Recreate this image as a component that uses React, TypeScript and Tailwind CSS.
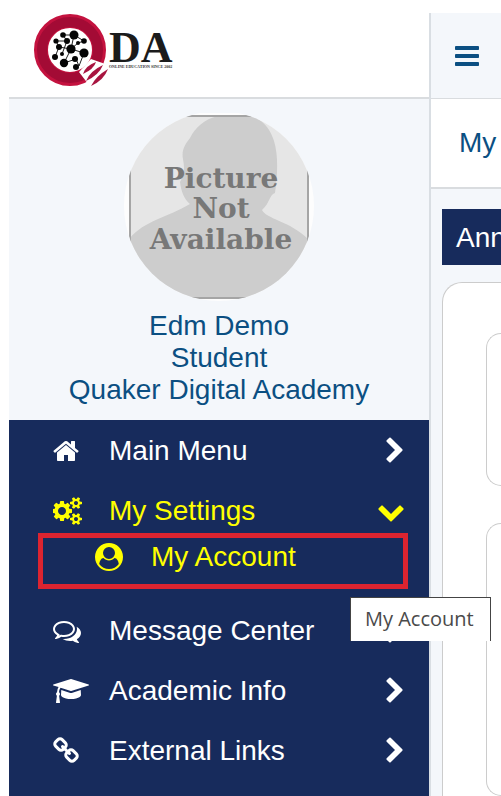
import clsx from "clsx";

type IconProps = {
  name: keyof typeof icons;
  className?: string;
};

const icons = {
  home: {
    box: "64 0 1664 1792",
    d: "M1472 992v480q0 26-19 45t-45 19h-384v-384h-256v384h-384q-26 0-45-19t-19-45v-480q0-1 .5-3t.5-3l575-474 575 474q1 2 1 6zm223-69l-62 74q-8 9-21 11h-3q-13 0-21-7l-692-577-692 577q-12 8-24 7-13-2-21-11l-62-74q-8-10-7-23.5t11-21.5l719-599q32-26 76-26t76 26l244 204v-195q0-14 9-23t23-9h192q14 0 23 9t9 23v408l219 182q10 8 11 21.5t-7 23.5z",
  },
  cogs: {
    box: "0 0 1920 1792",
    d: "M832 896q0-106-75-181t-181-75-181 75-75 181 75 181 181 75 181-75 75-181zm768 512q0-52-38-90t-90-38-90 38-38 90q0 53 37.5 90.5t90.5 37.5 90.5-37.5 37.5-90.5zm0-1024q0-52-38-90t-90-38-90 38-38 90q0 53 37.5 90.5t90.5 37.5 90.5-37.5 37.5-90.5zm-384 421v185q0 10-7 19.5t-16 10.5l-155 24q-11 35-32 76 34 48 90 115 7 11 7 20 0 12-7 19-23 30-82.5 89.5t-78.5 59.5q-11 0-21-7l-115-90q-37 19-77 31-11 108-23 155-7 24-30 24h-186q-11 0-20-7.5t-10-17.5l-23-153q-34-10-75-31l-118 89q-7 7-20 7-11 0-21-8-144-133-144-160 0-9 7-19 10-14 41-53t47-61q-23-44-35-82l-152-24q-10-1-17-9.5t-7-19.5v-185q0-10 7-19.5t16-10.5l155-24q11-35 32-76-34-48-90-115-7-11-7-20 0-12 7-20 22-30 82-89t79-59q11 0 21 7l115 90q34-18 77-32 11-108 23-154 7-24 30-24h186q11 0 20 7.5t10 17.5l23 153q34 10 75 31l118-89q8-7 20-7 11 0 21 8 144 133 144 160 0 8-7 19-12 16-42 54t-45 60q23 48 34 82l152 23q10 2 17 10.5t7 19.5zm640 533v140q0 16-149 31-12 27-30 52 51 113 51 138 0 4-4 7-122 71-124 71-8 0-46-47t-52-68q-20 2-30 2t-30-2q-14 21-52 68t-46 47q-2 0-124-71-4-3-4-7 0-25 51-138-18-25-30-52-149-15-149-31v-140q0-16 149-31 13-29 30-52-51-113-51-138 0-4 4-7 4-2 35-20t59-34 30-16q8 0 46 46.5t52 67.5q20-2 30-2t30 2q51-71 92-112l6-2q4 0 124 70 4 3 4 7 0 25-51 138 17 23 30 52 149 15 149 31zm0-1024v140q0 16-149 31-12 27-30 52 51 113 51 138 0 4-4 7-122 71-124 71-8 0-46-47t-52-68q-20 2-30 2t-30-2q-14 21-52 68t-46 47q-2 0-124-71-4-3-4-7 0-25 51-138-18-25-30-52-149-15-149-31v-140q0-16 149-31 13-29 30-52-51-113-51-138 0-4 4-7 4-2 35-20t59-34 30-16q8 0 46 46.5t52 67.5q20-2 30-2t30 2q51-71 92-112l6-2q4 0 124 70 4 3 4 7 0 25-51 138 17 23 30 52 149 15 149 31z",
  },
  comments: {
    box: "0 0 1792 1792",
    d: "M704 384q-153 0-286 52t-211.5 141-78.5 191q0 82 53 158t149 132l97 56-35 84q34-20 62-39l44-31 53 10q78 14 153 14 153 0 286-52t211.5-141 78.5-191-78.5-191-211.5-141-286-52zm0-128q191 0 353.5 68.5t256.5 186.5 94 257-94 257-256.5 186.5-353.5 68.5q-86 0-176-16-124 88-278 128-36 9-86 16h-3q-11 0-20.5-8t-11.5-21q-1-3-1-6.5t.5-6.5 2-6l2.5-5 3.5-5.5 4-5 4.5-5 4-4.5q5-6 23-25t26-29.5 22.5-29 25-38.5 20.5-44q-124-72-195-177t-71-224q0-139 94-257t256.5-186.5 353.5-68.5zm822 1169q10 24 20.5 44t25 38.5 22.5 29 26 29.5 23 25q1 1 4 4.5t4.5 5 4 5 3.5 5.5l2.5 5 2 6 .5 6.5-1 6.5q-3 14-13 22t-22 7q-50-7-86-16-154-40-278-128-90 16-176 16-271 0-472-132 58 4 88 4 161 0 309-45t264-129q125-92 192-212t67-254q0-77-23-152 129 71 204 178t75 230q0 120-71 224.5t-195 176.5z",
  },
  graduation: {
    box: "0 0 2304 1792",
    d: "M1774 836l18 316q4 69-82 128t-235 93.5-323 34.5-323-34.5-235-93.5-82-128l18-316 574 181q22 7 48 7t48-7zm530-324q0 23-22 31l-1120 352q-4 1-10 1t-10-1l-652-206q-43 34-71 111.5t-34 178.5q63 36 63 109 0 69-58 107l58 433q2 14-8 25-9 11-24 11h-192q-15 0-24-11-10-11-8-25l58-433q-58-38-58-107 0-73 65-111 11-207 98-330l-333-104q-22-8-22-31t22-31l1120-352q4-1 10-1t10 1l1120 352q22 8 22 31z",
  },
  link: {
    box: "64 0 1664 1792",
    d: "M1520 1216q0-40-28-68l-208-208q-28-28-68-28-42 0-72 32 3 3 19 18.5t21.5 21.5 15 19 13 25.5 3.5 27.5q0 40-28 68t-68 28q-15 0-27.5-3.5t-25.5-13-19-15-21.5-21.5-18.5-19q-33 31-33 73 0 40 28 68l206 207q27 27 68 27 40 0 68-26l147-146q28-28 28-67zm-703-705q0-40-28-68l-206-207q-28-28-68-28-39 0-68 27l-147 146q-28 28-28 67 0 40 28 68l208 208q27 27 68 27 42 0 72-31-3-3-19-18.5t-21.5-21.5-15-19-13-25.5-3.5-27.5q0-40 28-68t68-28q15 0 27.5 3.5t25.5 13 19 15 21.5 21.5 18.5 19q33-31 33-73zm895 705q0 120-85 203l-147 146q-83 83-203 83-121 0-204-85l-206-207q-83-83-83-203 0-123 88-209l-88-88q-86 88-208 88-120 0-204-84l-208-208q-84-84-84-204t85-203l147-146q83-83 203-83 121 0 204 85l206 207q83 83 83 203 0 123-88 209l88 88q86-88 208-88 120 0 204 84l208 208q84 84 84 204z",
  },
  user: {
    box: "0 0 1792 1792",
    d: "M1523 1339q-22-155-87.5-257.5t-184.5-118.5q-67 74-159.5 115.5t-195.5 41.5-195.5-41.5-159.5-115.5q-119 16-184.5 118.5t-87.5 257.5q106 150 271 237.5t356 87.5 356-87.5 271-237.5zm-243-699q0-159-112.5-271.5t-271.5-112.5-271.5 112.5-112.5 271.5 112.5 271.5 271.5 112.5 271.5-112.5 112.5-271.5zm512 256q0 182-71 347.5t-190.5 286-285.5 191.5-349 71-348-71-286-191-191-286-71-348 71-348 191-286 286-191 348-71 348 71 286 191 191 286 71 348z",
  },
  right: {
    box: "256 0 1280 1792",
    d: "M1363 877l-742 742q-19 19-45 19t-45-19l-166-166q-19-19-19-45t19-45l531-531-531-531q-19-19-19-45t19-45l166-166q19-19 45-19t45 19l742 742q19 19 19 45t-19 45z",
  },
  down: {
    box: "0 0 1792 1792",
    d: "M1683 808l-742 741q-19 19-45 19t-45-19l-742-741q-19-19-19-45.5t19-45.5l166-165q19-19 45-19t45 19l531 531 531-531q19-19 45-19t45 19l166 165q19 19 19 45.5t-19 45.5z",
  },
  bars: {
    box: "128 0 1536 1792",
    d: "M1664 1344v128q0 26-19 45t-45 19h-1408q-26 0-45-19t-19-45v-128q0-26 19-45t45-19h1408q26 0 45 19t19 45zm0-512v128q0 26-19 45t-45 19h-1408q-26 0-45-19t-19-45v-128q0-26 19-45t45-19h1408q26 0 45 19t19 45zm0-512v128q0 26-19 45t-45 19h-1408q-26 0-45-19t-19-45v-128q0-26 19-45t45-19h1408q26 0 45 19t19 45z",
  },
};

function Icon({ name, className }: IconProps) {
  return (
    <svg viewBox={icons[name].box} className={clsx("h-7 w-auto shrink-0 fill-current", className)} aria-hidden="true">
      <path d={icons[name].d} />
    </svg>
  );
}

function Logo() {
  return (
    <a href="#" aria-label="Quaker Digital Academy" className="flex">
      <svg viewBox="0 0 140 76" className="h-[76px] w-[140px]">
        <circle cx="37" cy="37" r="29" fill="#fff" stroke="#c4123f" strokeWidth="14" />
        <circle cx="37" cy="37" r="28" fill="none" stroke="#a30b35" strokeWidth="10" />
        <path d="M46 59L58 46L78 53L59 76Z" fill="#fff" />
        <g fill="#a81440">
          <path d="M50 61Q52 53 63 49Q61 56 50 61Z" />
          <path d="M53 68Q57 58 70 52Q66 62 53 68Z" />
          <path d="M58 73Q63 63 75 56Q71 67 58 73Z" />
        </g>
        <path
          d="M23 28L34 28M30 22L41 22L51 28L45 30M41 22L38 36L51 40L46 53L43 46L31 50L38 36L26 34L23 28M34 28L29 41M26 34L22 44M30 22L34 28M38 36L45 30"
          fill="none"
          stroke="#222"
          strokeWidth="1"
        />
        <g fill="#050505">
          <circle cx="41" cy="22" r="4.5" />
          <circle cx="30" cy="22" r="2.8" />
          <circle cx="23" cy="28" r="2.6" />
          <circle cx="34" cy="28" r="3" />
          <circle cx="45" cy="30" r="2" />
          <circle cx="51" cy="28" r="2.8" />
          <circle cx="26" cy="34" r="3" />
          <circle cx="38" cy="36" r="4.6" />
          <circle cx="51" cy="40" r="4.6" />
          <circle cx="29" cy="41" r="2" />
          <circle cx="22" cy="44" r="3" />
          <circle cx="31" cy="50" r="4.2" />
          <circle cx="42" cy="46" r="3" />
          <circle cx="43" cy="54" r="3" />
        </g>
        <text x="76" y="49" fontSize="44" fontWeight="700" fontFamily="'Liberation Serif', serif" fill="#1b1b1b">DA</text>
        <text x="76" y="55" fontSize="4" fontWeight="700" fontFamily="'Liberation Serif', serif" fill="#333">ONLINE EDUCATION SINCE 2002</text>
      </svg>
    </a>
  );
}

function Avatar() {
  return (
    <svg viewBox="0 0 190 190" className="size-[190px]" role="img" aria-label="Picture Not Available">
      <defs>
        <clipPath id="avatar-round">
          <circle cx="95" cy="93" r="95" />
        </clipPath>
      </defs>
      <g clipPath="url(#avatar-round)">
        <rect width="190" height="190" fill="#fdfdfd" />
        <rect x="6" y="3" width="178" height="182" fill="#e6e6e6" />
        <path
          d="M6 125C20 108 44 104 66 91C60 86 57 78 56 69C60 63 61 56 59 46C57 37 62 30 66 25C71 15 80 6 94 3H128C140 7 147 18 150 28C155 44 153 66 151 80C145 82 146 90 138 97C142 106 166 108 184 126V185H6Z"
          fill="#cdcdcd"
        />
        <rect x="6" y="3" width="178" height="182" fill="none" stroke="#a5a5a5" strokeWidth="2" />
      </g>
      <g fill="#787878" fontFamily="'DejaVu Serif', serif" fontWeight="700" fontSize="28" textAnchor="middle">
        <text x="97" y="75">Picture</text>
        <text x="97" y="105">Not</text>
        <text x="97" y="136">Available</text>
      </g>
    </svg>
  );
}

type MenuItemProps = {
  icon: keyof typeof icons;
  title: string;
  open?: boolean;
};

function MenuItem({ icon, title, open }: MenuItemProps) {
  return (
    <button
      type="button"
      aria-expanded={!!open}
      className={clsx("flex h-[60px] w-full items-center pr-6 pl-11 text-left", open ? "text-[#ffff00]" : "text-white")}
    >
      <span className="flex w-14">
        <Icon name={icon} />
      </span>
      <span className="grow">{title}</span>
      <Icon name={open ? "down" : "right"} />
    </button>
  );
}

export default function App() {
  return (
    <div className="flex min-h-screen bg-white pt-[13px] pl-[9px] font-['Liberation_Sans',Arial,sans-serif] text-[28px] leading-8">

      {/* Sidebar */}
      <aside className="flex w-[422px] shrink-0 flex-col border-r-2 border-[#d9dee3] bg-[#f4f7fb]">
        <div className="h-[86px] border-b-2 border-[#d9dcdf] bg-white pl-6">
          <Logo />
        </div>

        <div className="flex flex-col items-center pt-[14px] pb-[14px] text-center text-[#0b4f82]">
          <Avatar />
          <div className="pt-[7px]">
            <p>Edm Demo</p>
            <p>Student</p>
            <p>Quaker Digital Academy</p>
          </div>
        </div>

        <nav className="grow bg-[#172b5c] pt-px">
          <MenuItem icon="home" title="Main Menu" />
          <MenuItem icon="cogs" title="My Settings" open />

          <div className="relative -mt-2 mr-[21px] mb-3 ml-[29px]">
            <a href="#" title="My Account" className="flex h-14 items-center border-[5px] border-[#dc2430] pb-2 pl-[52px] text-[#ffff00]">
              <span className="flex w-14">
                <Icon name="user" />
              </span>
              My Account
            </a>
            <div role="tooltip" className="absolute top-16 left-[312px] z-10 h-11 w-[141px] border-t border-r border-l border-[#444] bg-white pl-[14px] font-['Open_Sans',sans-serif] text-xl leading-[42px] text-[#4a4a4a]">
              My Account
            </div>
          </div>

          <MenuItem icon="comments" title="Message Center" />
          <MenuItem icon="graduation" title="Academic Info" />
          <MenuItem icon="link" title="External Links" />
        </nav>
      </aside>

      {/* Page content, runs off the right edge */}
      <main className="flex min-w-0 grow flex-col overflow-hidden bg-[#f4f7fb] whitespace-nowrap text-[#0b4f82]">
        <div className="flex h-[86px] shrink-0 items-center border-b border-[#d9dcdf] pl-6">
          <button type="button" aria-label="Toggle menu">
            <Icon name="bars" />
          </button>
        </div>
        <h1 className="h-[90px] shrink-0 border-b-2 border-[#d9dcdf] bg-white pl-7 leading-[88px]">My</h1>

        <h2 className="mt-5 ml-[11px] h-14 shrink-0 bg-[#172b5c] pl-[14px] leading-[58px] text-white">Ann</h2>

        <div className="mt-[17px] ml-[11px] flex grow flex-col gap-[37px] rounded-tl-[20px] border-t border-l border-[#cccccc] bg-white pt-[50px] pl-[43px]">
          <div className="h-[153px] rounded-l-[20px] border-y border-l border-[#cccccc]"></div>
          <div className="grow rounded-l-[20px] border-y border-l border-[#cccccc]"></div>
        </div>
      </main>

    </div>
  );
}
